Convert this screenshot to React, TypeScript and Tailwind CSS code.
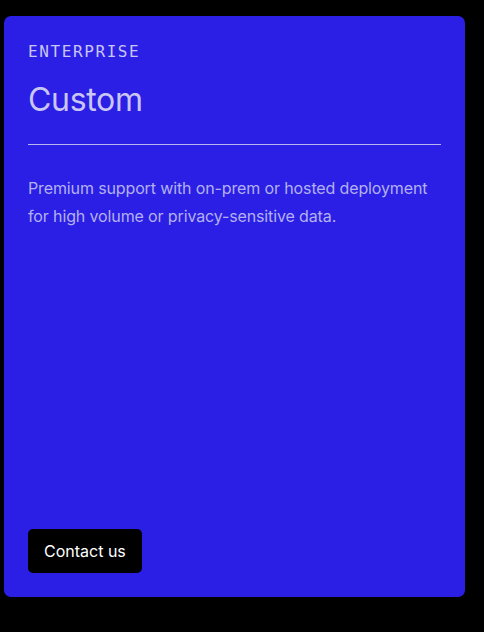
export default function App() {
  return (
    <div className="min-h-[632px] w-full bg-black pl-[4px] pt-[16px] font-['Inter',sans-serif]">
      <div className="flex h-[581px] w-[461px] flex-col rounded-[7px] bg-[#2b1fe6] p-6">
        {/* Plan header */}
        <div className="pt-[2px] font-['DejaVu_Sans_Mono',monospace] text-[16px] leading-5 tracking-[0.1em] text-[#c9c6f4]">
          ENTERPRISE
        </div>
        <h2 className="mt-[18px] text-[32px] leading-10 font-normal tracking-[-0.01em] text-[#c9c6f4]">Custom</h2>
        <div className="mt-[24px] h-px w-full bg-[#b8b6f2]" />

        <p className="mt-[29px] text-[16px] leading-7 tracking-[-0.008em] text-[#b3b1f0]">
          Premium support with on-prem or hosted deployment for high volume or privacy-sensitive data.
        </p>

        <div className="mt-auto">
          <button className="h-11 rounded-[5px] bg-black px-4 text-[16px] text-white">Contact us</button>
        </div>
      </div>
    </div>
  )
}
